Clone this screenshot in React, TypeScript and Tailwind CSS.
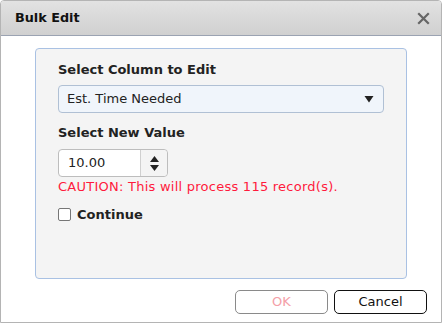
import React from "react";

const font = { fontFamily: '"DejaVu Sans", Verdana, sans-serif' };

export default function App() {
  return (
    <div
      className="w-[442px] h-[323px] bg-white border border-[#b4b4b4] rounded-t-[4px] flex flex-col overflow-hidden text-[#222]"
      style={font}
    >
      {/* Header */}
      <div className="h-[35px] shrink-0 flex items-center justify-between pl-[14px] pr-[11px] bg-gradient-to-b from-[#e2e2e2] to-[#d0d0d0] border-b border-[#9ba3b2]">
        <span className="text-[12.8px] font-bold text-[#111]">Bulk Edit</span>
        <svg width="13" height="13" viewBox="0 0 13 13" className="text-[#666]">
          <path d="M2 2 L11 11 M11 2 L2 11" stroke="currentColor" strokeWidth="2.2" strokeLinecap="square" />
        </svg>
      </div>

      {/* Body */}
      <div className="flex-1 flex flex-col px-[34px] pt-[12px]">
        <div className="h-[231px] bg-[#f4f4f4] border border-[#a9c1e3] rounded-[4px] px-[22px] pt-[13px] flex flex-col">
          <label className="text-[13px] font-bold text-[#222] leading-[16px]">Select Column to Edit</label>
          <div className="mt-[7px] w-[326px] h-[28px] bg-[#f0f5fb] border border-[#b0c0d4] rounded-[4px] flex items-center justify-between pl-[8px] pr-[9px]">
            <span className="text-[13px] text-[#222]">Est. Time Needed</span>
            <svg width="10" height="8" viewBox="0 0 10 8">
              <path d="M0.5 1 L9.5 1 L5 7.5 Z" fill="#222" />
            </svg>
          </div>
          <label className="mt-[12px] text-[13px] font-bold text-[#222] leading-[16px]">Select New Value</label>
          <div className="mt-[8px] w-[110px] h-[28px] bg-white border border-[#bdbdbd] rounded-[4px] flex">
            <div className="flex-1 flex items-center pl-[9px] text-[13px] text-[#222]">10.00</div>
            <div className="w-[27px] border-l border-[#d0d0d0] bg-[#f4f4f4] rounded-r-[4px] flex flex-col items-center justify-center gap-[3px]">
              <svg width="9" height="6" viewBox="0 0 9 6">
                <path d="M4.5 0 L9 6 L0 6 Z" fill="#222" />
              </svg>
              <svg width="9" height="6" viewBox="0 0 9 6">
                <path d="M0 0 L9 0 L4.5 6 Z" fill="#222" />
              </svg>
            </div>
          </div>
          <div className="mt-[2px] text-[13px] tracking-[0.25px] text-[#ff1a3c] leading-[16px]">
            CAUTION: This will process 115 record(s).
          </div>
          <label className="mt-[10px] flex items-center gap-[6px]">
            <span className="w-[13px] h-[13px] border border-[#767676] rounded-[2px] bg-white" />
            <span className="text-[13px] font-bold text-[#222]">Continue</span>
          </label>
        </div>

        {/* Footer */}
        <div className="flex justify-end gap-[6px] mt-[11px] -mr-[20px]">
          <button className="w-[93px] h-[24px] border border-[#8a8a8a] rounded-[5px] bg-white text-[13px] text-[#f4a0a8]">
            OK
          </button>
          <button className="w-[93px] h-[24px] border border-[#111] rounded-[5px] bg-white text-[13px] text-[#111]">
            Cancel
          </button>
        </div>
      </div>
    </div>
  );
}
